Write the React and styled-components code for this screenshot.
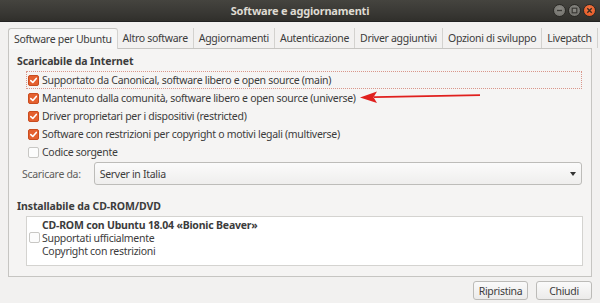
import React from "react";
import styled, { createGlobalStyle } from "styled-components";

const Global = createGlobalStyle`
  html, body { margin: 0; padding: 0; background: #f2f1f0; }
  body { font-family: "Noto Sans", "DejaVu Sans", sans-serif; font-size: 10.5px; letter-spacing: -0.3px; color: #3c3c3c; }
  * { box-sizing: border-box; }
`;

const Window = styled.div`
  width: 600px;
  height: 303px;
  display: flex;
  flex-direction: column;
  background: #f2f1f0;
  overflow: hidden;
`;

const TitleBar = styled.div`
  height: 22px;
  flex: none;
  background: linear-gradient(#45443f, #393834 60%, #302f2b);
  border-bottom: 1px solid #222;
  display: flex;
  align-items: center;
  justify-content: center;
  position: relative;
  color: #dfdbd2;
  font-weight: 700;
  font-size: 11px;
  letter-spacing: -0.2px;
`;

const WinButtons = styled.div`
  position: absolute;
  right: 4px;
  top: 4px;
  display: flex;
  gap: 2px;
`;

const WinBtn = styled.div`
  width: 13px;
  height: 13px;
  border-radius: 50%;
  background: ${(p) => (p.$close ? "radial-gradient(circle at 50% 40%, #f47c4a, #e0501c)" : "radial-gradient(circle at 50% 40%, #8c8b86, #6c6b66)")};
  border: 1px solid #2a2925;
  display: flex;
  align-items: center;
  justify-content: center;
`;

const Body = styled.div`
  flex: 1;
  display: flex;
  flex-direction: column;
  padding: 6px 8px 0 8px;
`;

const Tabs = styled.div`
  display: flex;
  align-items: flex-end;
  height: 20px;
  position: relative;
  z-index: 1;
`;

const Tab = styled.div`
  height: ${(p) => (p.$active ? "21px" : "20px")};
  padding: 0 5px;
  display: flex;
  align-items: center;
  white-space: nowrap;
  color: #3c3c3c;
  background: ${(p) => (p.$active ? "#f7f7f6" : "transparent")};
  border: ${(p) => (p.$active ? "1px solid #c6c5c2" : "none")};
  border-bottom: none;
  border-radius: ${(p) => (p.$active ? "3px 3px 0 0" : "0")};
  border-right: 1px solid #d3d2cf;
  margin-bottom: ${(p) => (p.$active ? "-1px" : "0")};
`;

const Panel = styled.div`
  height: 229px;
  border: 1px solid #c6c5c2;
  background: #f5f4f3;
  padding: 5px 8px 0 8px;
  display: flex;
  flex-direction: column;
  position: relative;
`;

const SectionTitle = styled.div`
  font-weight: 700;
  letter-spacing: -0.1px;
  color: #3c3c3c;
  height: 14px;
  line-height: 14px;
`;

const CheckList = styled.div`
  display: flex;
  flex-direction: column;
  padding-left: 9px;
  margin-top: 3px;
`;

const CheckRow = styled.div`
  height: 18px;
  display: flex;
  align-items: center;
  gap: 3px;
  padding-left: 1px;
  margin-right: 1px;
  border: 1px dotted ${(p) => (p.$focus ? "#d9968a" : "transparent")};
  white-space: nowrap;
`;

const Box = styled.span`
  width: 11px;
  height: 11px;
  flex: none;
  border-radius: 2px;
  display: inline-flex;
  align-items: center;
  justify-content: center;
  background: ${(p) => (p.$checked ? "#e4602f" : "#fcfcfc")};
  border: 1px solid ${(p) => (p.$checked ? "#c94c1f" : "#c8c7c4")};
`;

const Label = styled.span`
  color: #3c3c3c;
`;

const SourceRow = styled.div`
  display: flex;
  align-items: center;
  margin-top: 1px;
  padding-left: 5px;
  gap: 13px;
`;

const SourceLabel = styled.span`
  color: #5d5d5b;
`;

const Combo = styled.div`
  flex: 1;
  height: 23px;
  margin-right: 1px;
  border: 1px solid #bdbcb9;
  border-radius: 3px;
  background: linear-gradient(#fbfbfb, #efeeed);
  display: flex;
  align-items: center;
  justify-content: space-between;
  padding: 0 5px 0 5px;
  color: #3c3c3c;
`;

const Caret = styled.span`
  width: 0;
  height: 0;
  border-left: 3.5px solid transparent;
  border-right: 3.5px solid transparent;
  border-top: 4px solid #333;
`;

const CdTitle = styled(SectionTitle)`
  margin-top: 14px;
`;

const ListBox = styled.div`
  margin: 3px 0 0 9px;
  height: 50px;
  background: #ffffff;
  border: 1px solid #d4d3d0;
  display: flex;
  align-items: flex-start;
  padding: 1px 0 0 2px;
  gap: 2px;
`;

const ListCheck = styled.div`
  padding-top: 14px;
`;

const ListText = styled.div`
  display: flex;
  flex-direction: column;
  line-height: 13px;
  color: #3c3c3c;
`;

const Bold = styled.span`
  font-weight: 700;
  letter-spacing: -0.2px;
  line-height: 14px;
`;

const Footer = styled.div`
  display: flex;
  justify-content: flex-end;
  gap: 8px;
  padding-top: 4px;
`;

const Button = styled.button`
  height: 19px;
  padding: 0;
  width: ${(p) => p.$w}px;
  border: 1px solid #bcbbb8;
  border-radius: 3px;
  background: linear-gradient(#fafafa, #ecebea);
  font-family: inherit;
  font-size: 10.5px;
  letter-spacing: -0.3px;
  color: #3c3c3c;
`;

const Tick = () => (
  <svg width="9" height="9" viewBox="0 0 9 9">
    <path d="M1.8 4.6 L3.8 6.5 L7.3 2.4" fill="none" stroke="#fff" strokeWidth="1.6" strokeLinecap="round" strokeLinejoin="round" />
  </svg>
);

const Arrow = styled.svg`
  position: absolute;
  left: 351px;
  top: 40px;
`;

const items = [
  { t: "Supportato da Canonical, software libero e open source (main)", c: true, f: true },
  { t: "Mantenuto dalla comunità, software libero e open source (universe)", c: true },
  { t: "Driver proprietari per i dispositivi (restricted)", c: true },
  { t: "Software con restrizioni per copyright o motivi legali (multiverse)", c: true },
  { t: "Codice sorgente", c: false },
];

const tabs = [
  "Software per Ubuntu",
  "Altro software",
  "Aggiornamenti",
  "Autenticazione",
  "Driver aggiuntivi",
  "Opzioni di sviluppo",
  "Livepatch",
];

export default function App() {
  return (
    <>
      <Global />
      <Window>
        <TitleBar>
          Software e aggiornamenti
          <WinButtons>
            <WinBtn>
              <svg width="7" height="7" viewBox="0 0 7 7"><path d="M1 3.5h5" stroke="#3a3935" strokeWidth="1.4" /></svg>
            </WinBtn>
            <WinBtn>
              <svg width="7" height="7" viewBox="0 0 7 7"><rect x="1.2" y="1.2" width="4.6" height="4.6" fill="none" stroke="#3a3935" strokeWidth="1.2" /></svg>
            </WinBtn>
            <WinBtn $close>
              <svg width="7" height="7" viewBox="0 0 7 7"><path d="M1.3 1.3l4.4 4.4M5.7 1.3l-4.4 4.4" stroke="#3a2a20" strokeWidth="1.4" /></svg>
            </WinBtn>
          </WinButtons>
        </TitleBar>
        <Body>
          <Tabs>
            {tabs.map((t, i) => (
              <Tab key={t} $active={i === 0}>{t}</Tab>
            ))}
          </Tabs>
          <Panel>
            <SectionTitle>Scaricabile da Internet</SectionTitle>
            <CheckList>
              {items.map((it) => (
                <CheckRow key={it.t} $focus={it.f}>
                  <Box $checked={it.c}>{it.c && <Tick />}</Box>
                  <Label>{it.t}</Label>
                </CheckRow>
              ))}
            </CheckList>
            <SourceRow>
              <SourceLabel>Scaricare da:</SourceLabel>
              <Combo>
                <span>Server in Italia</span>
                <Caret />
              </Combo>
            </SourceRow>
            <CdTitle>Installabile da CD-ROM/DVD</CdTitle>
            <ListBox>
              <ListCheck>
                <Box />
              </ListCheck>
              <ListText>
                <Bold>CD-ROM con Ubuntu 18.04 «Bionic Beaver»</Bold>
                <span>Supportati ufficialmente</span>
                <span>Copyright con restrizioni</span>
              </ListText>
            </ListBox>
            <Arrow width="125" height="16" viewBox="0 0 125 16">
              <path d="M14 8.2 L120 6.2" stroke="#e0201e" strokeWidth="1.8" fill="none" />
              <path d="M0 8.5 L17 2.5 L13.5 8.3 L17 14 Z" fill="#e0201e" />
            </Arrow>
          </Panel>
          <Footer>
            <Button $w={55}>Ripristina</Button>
            <Button $w={56}>Chiudi</Button>
          </Footer>
        </Body>
      </Window>
    </>
  );
}
